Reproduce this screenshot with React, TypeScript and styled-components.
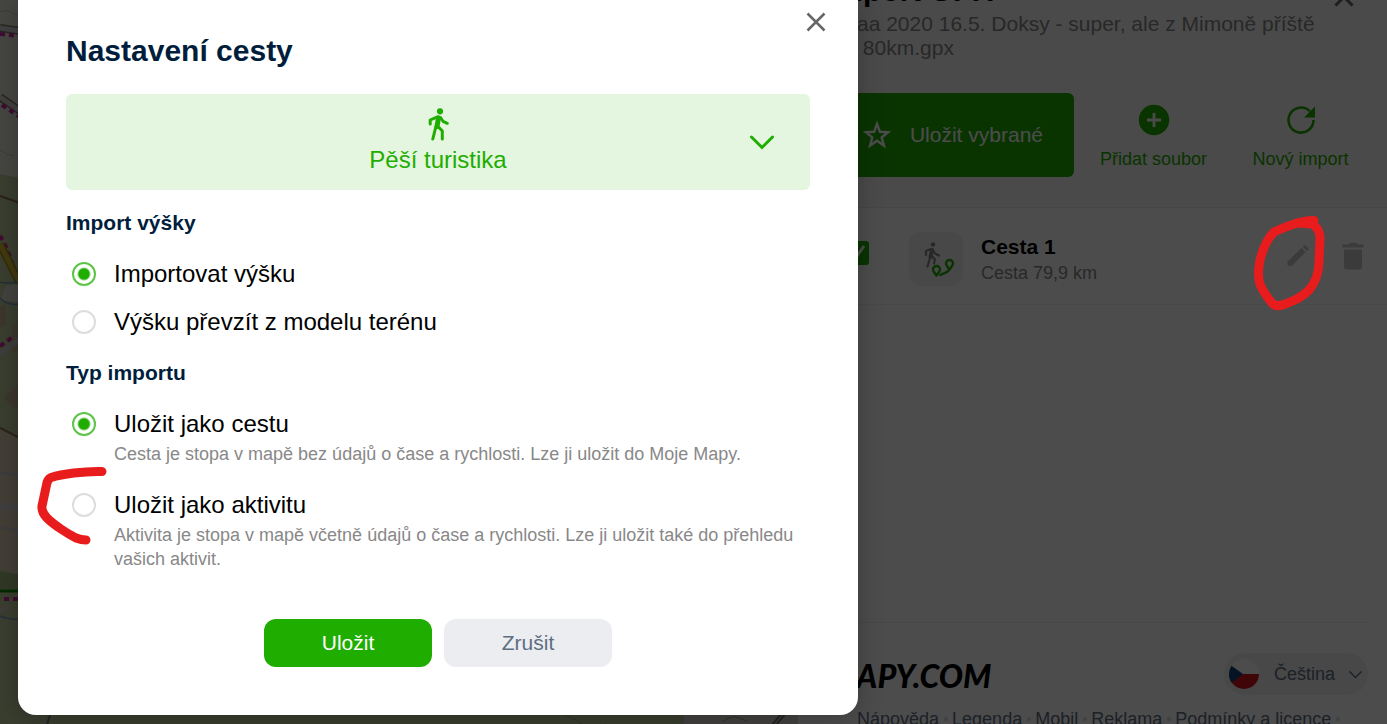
import React, { useState } from 'react';
import styled, { createGlobalStyle } from 'styled-components';

const green = '#1fad00';

const GlobalStyle = createGlobalStyle`
  *, *::before, *::after { box-sizing: border-box; }
  body { margin: 0; font-family: "Liberation Sans", Arial, sans-serif; color: #000; }
  button, input { font: inherit; color: inherit; }
  button { border: 0; padding: 0; background: none; cursor: pointer; }
  h1, h2, h3, p { margin: 0; }
`;

const Page = styled.div`
  position: relative;
  display: grid;
  grid-template-columns: minmax(0, 1fr) 589px;
  height: 100vh;
  overflow: hidden;
`;

const MapArea = styled.svg`
  display: block;
  width: 100%;
  height: 100%;
  background: #bfcf9e;
`;

/* ---------- side panel ---------- */

const Panel = styled.aside`
  display: flex;
  flex-direction: column;
  height: 100vh;
  background: #fff;
  overflow: hidden;
`;

const PanelHeader = styled.header`
  margin-top: -27px;
  padding: 0 13px 30px 30px;
  background: #f7f7f7;
  border-bottom: 1px solid #ececec;
`;

const PanelTop = styled.div`
  display: flex;
  justify-content: space-between;
  align-items: flex-end;
  padding-right: 18px;
`;

const PanelTitle = styled.h1`
  font-size: 30px;
  line-height: 36px;
`;

const FileName = styled.p`
  margin: 3px 0 33px;
  padding-left: 29px;
  font-size: 21px;
  line-height: 24px;
  color: #888;
`;

const Toolbar = styled.div`
  display: flex;
`;

const SaveSelected = styled.button`
  display: flex;
  align-items: center;
  justify-content: flex-end;
  gap: 19px;
  flex: 0 0 246px;
  height: 84px;
  margin-right: 6px;
  padding-right: 31px;
  border-radius: 6px;
  background: ${green};
  color: #fff;
  font-size: 21px;
`;

const ToolButton = styled.button`
  display: flex;
  flex: 1;
  flex-direction: column;
  align-items: center;
  gap: 9px;
  padding-top: 2px;
  justify-content: center;
  color: ${green};
  font-size: 18px;
  line-height: 24px;
`;

const TrackRow = styled.section`
  display: flex;
  align-items: center;
  height: 97px;
  padding: 0 22px 0 47px;
  border-bottom: 1px solid #f2f2f2;
`;

const Tick = styled.input`
  appearance: none;
  width: 24px;
  height: 24px;
  margin: 0 40px 6px 0;
  border-radius: 3px;
  background: ${green} url("data:image/svg+xml,%3Csvg xmlns='http://www.w3.org/2000/svg' viewBox='0 0 24 24' fill='none' stroke='white' stroke-width='3'%3E%3Cpath d='M5 12l5 6 9-13'/%3E%3C/svg%3E");
`;

const TrackTile = styled.div`
  width: 54px;
  height: 54px;
  margin: 6px 18px 0 0;
  border-radius: 12px;
  background: #f0f0f0;
`;

const TrackText = styled.div`
  flex: 1;
  padding-top: 8px;
`;

const TrackName = styled.h2`
  font-size: 21px;
  line-height: 27px;
`;

const TrackMeta = styled.p`
  font-size: 18px;
  line-height: 27px;
  color: #888;
`;

const RowTools = styled.div`
  display: flex;
  gap: 28px;
  color: #c6c6c6;
`;

const IconButton = styled.button`
  display: flex;
  color: inherit;
`;

const PanelClose = styled(IconButton)`
  color: #666;
`;

const Footer = styled.footer`
  height: 102px;
  margin: auto 19px 0 30px;
  border-top: 1px solid #eee;
`;

const FooterTop = styled.div`
  display: flex;
  justify-content: space-between;
  align-items: center;
  margin: 30px 0 12px;
`;

const Logo = styled.div`
  padding-top: 4px;
  font: italic 900 32px/38px Lato, sans-serif;
`;

const Language = styled.button`
  display: flex;
  align-items: center;
  height: 42px;
  padding: 0 6px 0 5px;
  border-radius: 21px;
  background: #f0f0f0;
  color: #5f6f83;
  font-size: 18px;
`;

const LanguageName = styled.span`
  margin: 0 14px 0 15px;
`;

const FooterLinks = styled.nav`
  display: flex;
  padding-left: 29px;
  font-size: 18px;
  line-height: 24px;
  white-space: nowrap;
`;

const FooterLink = styled.a`
  display: flex;
  align-items: center;
  color: #5f6f83;
  text-decoration: none;
  &::after {
    content: "";
    width: 4px;
    height: 4px;
    margin: 0 4px 0 5px;
    border-radius: 50%;
    background: #d5d9de;
  }
`;

/* ---------- dialog ---------- */

const Overlay = styled.div`
  position: absolute;
  inset: 0;
  padding: 0 18px;
  background: rgba(0, 0, 0, 0.7);
`;

const Dialog = styled.form`
  width: 100%;
  max-width: 840px;
  padding: 10px 48px 48px;
  border-radius: 0 0 18px 18px;
  background: #fff;
  box-shadow: 0 3px 24px rgba(0, 0, 0, 0.25);
`;

const DialogClose = styled(IconButton)`
  margin: 0 -18px 0 auto;
  color: #666;
`;

const DialogTitle = styled.h2`
  margin-bottom: 26px;
  font-size: 30px;
  line-height: 34px;
  color: #001e3c;
`;

const Activity = styled.button`
  display: grid;
  grid-template-columns: 24px 1fr 24px;
  align-items: center;
  width: 100%;
  height: 96px;
  padding: 0 36px;
  border-radius: 6px;
  background: #e4f5e0;
  color: ${green};
`;

const ActivityLabel = styled.span`
  display: flex;
  grid-column: 2;
  flex-direction: column;
  align-items: center;
  gap: 5px;
  padding-bottom: 5px;
  font-size: 24px;
  line-height: 24px;
`;

const Group = styled.fieldset`
  min-width: 0;
  margin: 21px 0 0;
  padding: 0;
  border: 0;
`;

const GroupTitle = styled.legend`
  margin-bottom: 21px;
  padding: 0;
  font-size: 21px;
  font-weight: bold;
  line-height: 24px;
  color: #001e3c;
`;

const Options = styled.div<{ $gap: number }>`
  display: grid;
  gap: ${(p) => p.$gap}px;
`;

const Option = styled.label`
  display: grid;
  grid-template-columns: 24px 1fr;
  column-gap: 18px;
  align-items: center;
  padding-left: 6px;
`;

const Radio = styled.input`
  appearance: none;
  width: 24px;
  height: 24px;
  margin: 0;
  border: 2px solid #ddd;
  border-radius: 50%;
  &:checked {
    border-color: #5cc545;
    background: radial-gradient(circle, ${green} 5px, transparent 7px);
  }
`;

const OptionName = styled.span`
  font-size: 24px;
  line-height: 36px;
`;

const OptionHint = styled.span`
  grid-column: 2;
  font-size: 18px;
  line-height: 24px;
  color: #888;
`;

const Buttons = styled.div`
  display: flex;
  justify-content: center;
  gap: 12px;
  margin-top: 48px;
`;

const DialogButton = styled.button<{ $primary?: boolean }>`
  width: 168px;
  height: 48px;
  border-radius: 12px;
  background: ${(p) => (p.$primary ? green : '#ebedf0')};
  color: ${(p) => (p.$primary ? '#fff' : '#5f6f83')};
  font-size: 21px;
`;

const MarkLayer = styled.svg<{ $side: 'left' | 'right' }>`
  position: absolute;
  top: 0;
  ${(p) => p.$side}: 0;
  width: 140px;
  height: 100%;
  pointer-events: none;
`;

/* ---------- drawings ---------- */

const Walker = () => (
  <svg width="36" height="36" viewBox="0 0 36 36" fill="none" stroke="currentColor" strokeWidth="3" strokeLinecap="round" strokeLinejoin="round">
    <circle cx="20" cy="4.3" r="3.1" fill="currentColor" stroke="none" />
    <path d="M17.500 9.800l-7.300 3.200v4M20.500 10.500l2.500 3.800 4.300 2M15.800 20l-3 12M19 20.500l3.300 3.500v8" />
    <path d="M18.500 11l-1.500 8.500" strokeWidth="5" />
  </svg>
);

const Cross = ({ stroke }: { stroke: number }) => (
  <svg width="24" height="24" viewBox="0 0 24 24" fill="none" stroke="currentColor" strokeWidth={stroke}>
    <path d="M3.500 3.500l17 17M20.500 3.500l-17 17" />
  </svg>
);

const Chevron = ({ width, stroke }: { width: number; stroke: number }) => (
  <svg width={width} height={width} viewBox="0 0 24 24" fill="none" stroke="currentColor" strokeWidth={stroke} strokeLinecap="round">
    <path d="M1.500 7L12 17.500 22.500 7" />
  </svg>
);

const Star = () => (
  <svg width="28" height="28" viewBox="0 0 28 28" fill="none" stroke="currentColor" strokeWidth="2.400">
    <path d="M14 2.800l2.900 8 8.300.4-6.500 5.200 2.200 8.200L14 19.800l-6.900 4.800 2.200-8.200-6.500-5.200 8.300-.4z" />
  </svg>
);

const AddCircle = () => (
  <svg width="36" height="36" viewBox="0 0 36 36">
    <circle cx="18" cy="18" r="15.200" fill="currentColor" />
    <path d="M18 11v14M11 18h14" stroke="#f7f7f7" strokeWidth="2.800" />
  </svg>
);

const Reload = () => (
  <svg width="36" height="36" viewBox="0 0 36 36" fill="none" stroke="currentColor" strokeWidth="2.600">
    <path d="M30.500 18A12.500 12.500 0 1 1 26.800 9.200" />
    <path d="M32 4.500v11H21z" fill="currentColor" stroke="none" />
  </svg>
);

const TrackIcon = () => (
  <svg width="54" height="54" viewBox="0 0 54 54" fill="none" strokeLinecap="round" strokeLinejoin="round">
    <circle cx="24" cy="12.500" r="2.300" fill="#888" />
    <path d="M22 17l-5 2v4M24 18l2 3.500 4 2M21 26l-2.500 8.500M23 24l3 3.500-1 4" stroke="#888" strokeWidth="2.200" />
    <path d="M23 18l-1.500 7" stroke="#888" strokeWidth="4" />
    <path d="M31.500 43c3-2.500 6-1.500 8-4.500M27.500 43.500c-2-3-3.500-4.200-3.500-6a3.500 3.500 0 0 1 7 0c0 1.800-1.500 3-3.500 6zM40.500 37.500c-2-3-3.500-4.200-3.500-6a3.500 3.500 0 0 1 7 0c0 1.800-1.500 3-3.500 6z" stroke={green} strokeWidth="2.400" />
  </svg>
);

const Pencil = () => (
  <svg width="30" height="30" viewBox="0 0 30 30" fill="currentColor">
    <path d="M4.500 20.500L18.500 7l4 4L9 25H6q-1.500 0-1.500-1.500zM19.800 5.700l1.200-1.100q.8-.8 1.600 0l2.600 2.600q.8.800 0 1.600l-1.400 1.300z" />
  </svg>
);

const Trash = () => (
  <svg width="24" height="30" viewBox="0 0 24 30" fill="currentColor">
    <path d="M1.500 3.500H7l2-1.800h6l2 1.800h5.500v3h-21zM3 8.500h18V26q0 2.500-2.500 2.500h-13Q3 28.500 3 26z" />
  </svg>
);

const Flag = () => (
  <svg width="30" height="30" viewBox="0 0 30 30">
    <clipPath id="flag"><circle cx="15" cy="15" r="15" /></clipPath>
    <g clipPath="url(#flag)">
      <path d="M0 0h30v15H0z" fill="#fff" />
      <path d="M0 15h30v15H0z" fill="#d7141a" />
      <path d="M0 5l14 10L0 26z" fill="#11457e" />
    </g>
  </svg>
);

const MapDrawing = () => (
  <MapArea aria-hidden="true">
    <path d="M0 0h40v182L0 174z" fill="#e8e8da" />
    <path d="M0 12q8-3 12 1t8-2M0 150q8 6 14 6M0 270q8-4 18 4" fill="none" stroke="#c4c4b8" />
    <g fill="none">
      <path d="M0 28l20 3M0 97l20 14" stroke="#8a806c" strokeWidth="8" />
      <path d="M0 28l20 3M0 97l20 14" stroke="#d8d8d8" strokeWidth="5" />
      <path d="M0 34l20 2M2 105l18 12M0 236q10 14 20 56M0 346l20-14" stroke="#d028a0" strokeWidth="4" strokeDasharray="5 4" />
      <path d="M0 196l20 7" stroke="#8a7048" strokeWidth="2" />
      <path d="M0 244q10 20 20 40" stroke="#a89020" strokeWidth="8" />
      <path d="M0 244q10 20 20 40" stroke="#dcc030" strokeWidth="5" />
    </g>
    <path d="M0 300l6-14 12-2v18z" fill="#dde0d0" />
    <path d="M0 282q8 2 20 0M0 298q8 8 20 6" fill="none" stroke="#7a9cc0" strokeWidth="1.500" />
    <path d="M0 306l6-2v20l-6 4zM12 326l8-8v30l-8 6zM3 398l17-16v30z" fill="#c8b498" />
    <path d="M0 354l20-15" stroke="#ccc" strokeWidth="5" />
    <path d="M0 428l20 8v138l-20-4z" fill="#e2d0b4" />
    <path d="M0 428l20 10" stroke="#8a7048" strokeWidth="2" />
    <path d="M0 473l20 2M0 527l20 4" stroke="#c8c8c8" strokeWidth="3" />
    <path d="M0 506l20 2" stroke="#d2d2d2" strokeWidth="7" />
    <path d="M0 571l20 4v14H0z" fill="#a2bd7c" />
    <path d="M0 591h20" stroke="#108a00" strokeWidth="3" />
    <path d="M4 599h20" stroke="#d028a0" strokeWidth="4" strokeDasharray="5 4" />
    <path d="M0 608l10-4v8H0z" fill="#d4ceb8" />
    <path d="M0 616q8 4 20 3" fill="none" stroke="#7a9cc0" strokeWidth="1.500" />
    <path d="M684 700h120v30H684z" fill="#dedad4" />
    <path d="M768 730l18-22M772 730l18-22M46 728l6-20" stroke="#777" strokeWidth="2" />
    <path d="M560 714q12 2 18 8t28 2M722 722q12-10 26 0" fill="none" stroke="#9bab80" />
  </MapArea>
);

const links = ['Nápověda', 'Legenda', 'Mobil', 'Reklama', 'Podmínky a licence'];

export default function App() {
  const [height, setHeight] = useState('import');
  const [kind, setKind] = useState('route');

  return (
    <Page>
      <GlobalStyle />
      <MapDrawing />
      <Panel>
        <PanelHeader>
          <PanelTop>
            <PanelTitle>Import GPX</PanelTitle>
            <PanelClose aria-label="Zavřít panel"><Cross stroke={3} /></PanelClose>
          </PanelTop>
          <FileName>aa 2020 16.5. Doksy - super, ale z Mimoně příště<br />&nbsp;80km.gpx</FileName>
          <Toolbar>
            <SaveSelected><Star />Uložit vybrané</SaveSelected>
            <ToolButton><AddCircle />Přidat soubor</ToolButton>
            <ToolButton><Reload />Nový import</ToolButton>
          </Toolbar>
        </PanelHeader>
        <TrackRow>
          <Tick type="checkbox" defaultChecked aria-label="Cesta 1" />
          <TrackTile><TrackIcon /></TrackTile>
          <TrackText>
            <TrackName>Cesta 1</TrackName>
            <TrackMeta>Cesta 79,9 km</TrackMeta>
          </TrackText>
          <RowTools>
            <IconButton aria-label="Upravit"><Pencil /></IconButton>
            <IconButton aria-label="Smazat"><Trash /></IconButton>
          </RowTools>
        </TrackRow>
        <Footer>
          <FooterTop>
            <Logo>MAPY.COM</Logo>
            <Language>
              <Flag />
              <LanguageName>Čeština</LanguageName>
              <Chevron width={13} stroke={2.5} />
            </Language>
          </FooterTop>
          <FooterLinks>
            {links.map((name) => <FooterLink href="#" key={name}>{name}</FooterLink>)}
          </FooterLinks>
        </Footer>
      </Panel>

      <Overlay>
        <Dialog role="dialog" aria-labelledby="dialog-title" onSubmit={(e) => e.preventDefault()}>
          <DialogClose type="button" aria-label="Zavřít"><Cross stroke={2.5} /></DialogClose>
          <DialogTitle id="dialog-title">Nastavení cesty</DialogTitle>
          <Activity type="button">
            <ActivityLabel><Walker />Pěší turistika</ActivityLabel>
            <Chevron width={24} stroke={3} />
          </Activity>
          <Group>
            <GroupTitle>Import výšky</GroupTitle>
            <Options $gap={12}>
              <Option>
                <Radio type="radio" name="height" checked={height === 'import'} onChange={() => setHeight('import')} />
                <OptionName>Importovat výšku</OptionName>
              </Option>
              <Option>
                <Radio type="radio" name="height" checked={height === 'terrain'} onChange={() => setHeight('terrain')} />
                <OptionName>Výšku převzít z modelu terénu</OptionName>
              </Option>
            </Options>
          </Group>
          <Group>
            <GroupTitle>Typ importu</GroupTitle>
            <Options $gap={21}>
              <Option>
                <Radio type="radio" name="kind" checked={kind === 'route'} onChange={() => setKind('route')} />
                <OptionName>Uložit jako cestu</OptionName>
                <OptionHint>Cesta je stopa v mapě bez údajů o čase a rychlosti. Lze ji uložit do Moje Mapy.</OptionHint>
              </Option>
              <Option>
                <Radio type="radio" name="kind" checked={kind === 'activity'} onChange={() => setKind('activity')} />
                <OptionName>Uložit jako aktivitu</OptionName>
                <OptionHint>Aktivita je stopa v mapě včetně údajů o čase a rychlosti. Lze ji uložit také do přehledu vašich aktivit.</OptionHint>
              </Option>
            </Options>
          </Group>
          <Buttons>
            <DialogButton $primary>Uložit</DialogButton>
            <DialogButton type="button">Zrušit</DialogButton>
          </Buttons>
        </Dialog>
      </Overlay>

      <MarkLayer $side="left" fill="none" stroke="#e81c1c" strokeWidth="9" strokeLinecap="round" strokeLinejoin="round" aria-hidden="true">
        <path d="M102 471.500C84 471 62 474 51 477.500 48 479 47 481 46.500 485L42 506C41.500 511 43 514 47 518 54 525 68 534 76 538 80 539.500 83 540 86 540" />
      </MarkLayer>
      <MarkLayer $side="right" fill="none" stroke="#e81c1c" strokeWidth="9" strokeLinecap="round" strokeLinejoin="round" aria-hidden="true">
        <path d="M67 220.500C55 220 40 226 27 232 20 239 16 248 13 260 11 270 11 278 13 284 16 292 21 298 25 303 28 307 35 306 43 302 51 299 57 295 62 290 68 283 72 272 72 262L73 238C73 231 70 227 65 224L50 223" />
      </MarkLayer>
    </Page>
  );
}
